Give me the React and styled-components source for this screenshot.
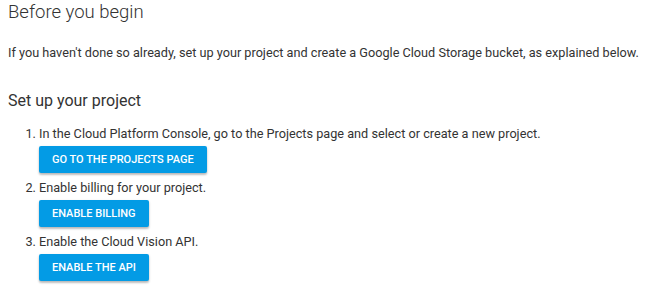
import React from "react";
import styled, { createGlobalStyle } from "styled-components";

const Global = createGlobalStyle`
  html, body { margin: 0; padding: 0; background: #fff; }
  body { font-family: Roboto, "Noto Sans", Arial, sans-serif; color: #333; }
`;

const Page = styled.div`
  padding: 0 8px;
`;

const Title = styled.h1`
  margin: 0;
  font-size: 18.5px;
  font-weight: 300;
  line-height: 24px;
  color: #333;
`;

const Intro = styled.p`
  margin: 19px 0 0 0;
  font-size: 12.7px;
  line-height: 20px;
  color: #333;
  white-space: nowrap;
`;

const Section = styled.h2`
  margin: 26px 0 0 0;
  font-size: 16px;
  font-weight: 400;
  line-height: 24px;
  color: #333;
`;

const Steps = styled.ol`
  margin: 11px 0 0 0;
  padding-left: 31px;
  font-size: 12.7px;
  line-height: 20px;
  color: #333;
`;

const Step = styled.li`
  margin: 0;
`;

const Button = styled.button`
  display: block;
  margin: 2px 0 5px 0;
  height: 27px;
  padding: 0 13px;
  border: none;
  border-radius: 2px;
  background: #039be5;
  color: #fff;
  font-family: Roboto, "Noto Sans", Arial, sans-serif;
  font-size: 11px;
  font-weight: 500;
  text-transform: uppercase;
  box-shadow: 0 2px 2px rgba(0, 0, 0, 0.2), 0 1px 3px rgba(0, 0, 0, 0.12);
  cursor: pointer;
`;

const steps = [
  { text: "In the Cloud Platform Console, go to the Projects page and select or create a new project.", button: "Go to the projects page" },
  { text: "Enable billing for your project.", button: "Enable billing" },
  { text: "Enable the Cloud Vision API.", button: "Enable the API" },
];

export default function App() {
  return (
    <Page>
      <Global />
      <Title>Before you begin</Title>
      <Intro>
        If you haven't done so already, set up your project and create a Google Cloud Storage bucket, as explained below.
      </Intro>
      <Section>Set up your project</Section>
      <Steps>
        {steps.map((s) => (
          <Step key={s.button}>
            {s.text}
            <Button>{s.button}</Button>
          </Step>
        ))}
      </Steps>
    </Page>
  );
}
